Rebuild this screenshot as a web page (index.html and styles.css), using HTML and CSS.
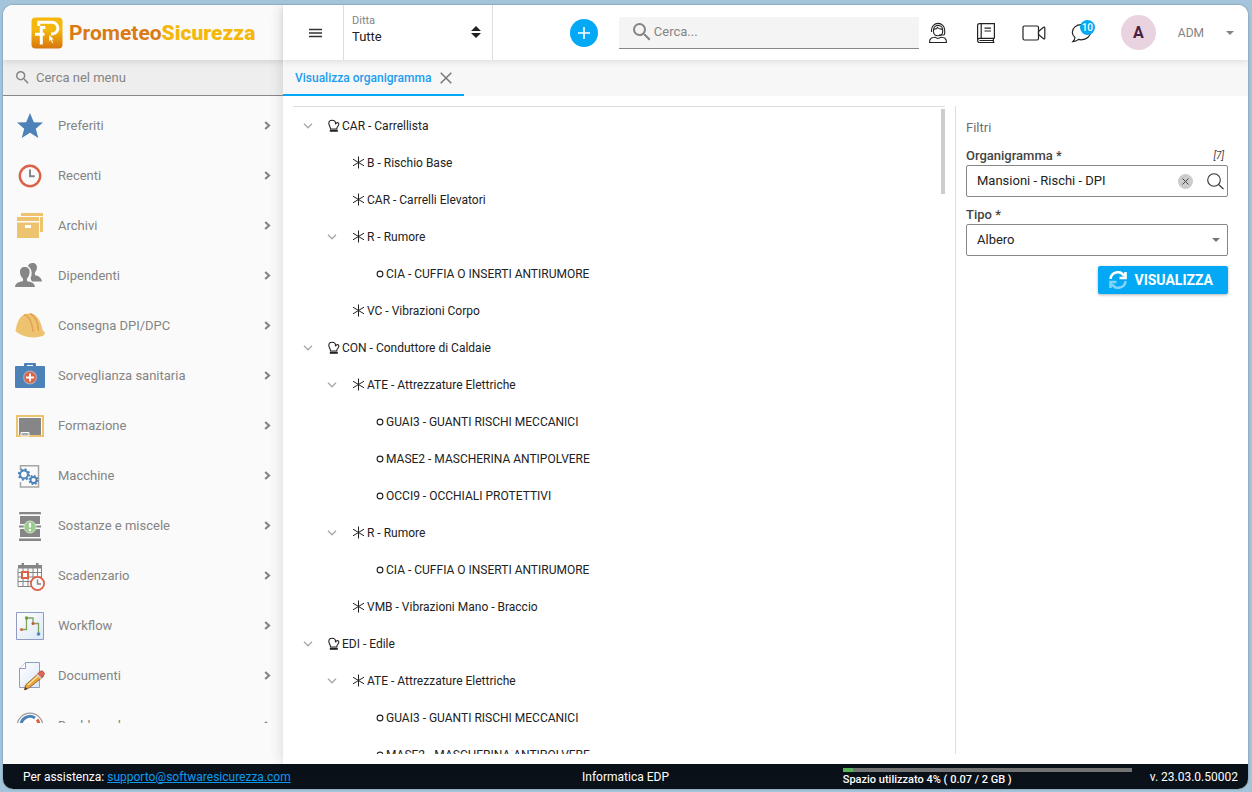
FILE: index.html
```html
<!DOCTYPE html>
<html lang="it">
<head>
    <meta charset="UTF-8">
    <meta name="viewport" content="width=device-width, initial-scale=1.0">
    <title>PrometeoSicurezza - Visualizza organigramma</title>
    <link rel="stylesheet" href="styles.css">
</head>
<body>
    <!-- Shared icons -->
    <svg class="sprite" aria-hidden="true">
        <symbol id="i-right" viewBox="0 0 8 10">
            <path d="M2.200 1L6 4.500 2.200 8" fill="none" stroke="currentColor" stroke-width="2.200"/>
        </symbol>
        <symbol id="i-down" viewBox="0 0 10 6">
            <path d="M1 .8l4 4 4-4" fill="none" stroke="currentColor" stroke-width="1.400"/>
        </symbol>
        <symbol id="i-caret" viewBox="0 0 8 4">
            <path d="M0 0h8L4 4z" fill="currentColor"/>
        </symbol>
        <symbol id="i-search" viewBox="3 3 18 18">
            <path d="M15.500 14h-.79l-.28-.27A6.470 6.470 0 0 0 16 9.500 6.500 6.500 0 1 0 9.500 16c1.610 0 3.090-.59 4.230-1.570l.27.28v.79l5 4.990L20.490 19l-4.990-5zm-6 0C7.010 14 5 11.990 5 9.500S7.010 5 9.500 5 14 7.010 14 9.500 11.990 14 9.500 14z" fill="currentColor"/>
        </symbol>
        <symbol id="i-glove" viewBox="0 0 12 14">
            <path d="M2.600 10C2.400 8 .9 6.300.8 4.200.8 2.400 2.300 1.200 4.200 1.200c2 0 3.300 1.100 3.300 3v1c.6-1.300 2-2 2.900-1.300 1 .9.2 2.400-.7 3.600-.5.7-.9 1.500-1 2.500z" fill="none" stroke="currentColor" stroke-width="1.100"/>
            <path d="M1.800 10.800h8v2h-8z" fill="currentColor"/>
        </symbol>
        <symbol id="i-risk" viewBox="0 0 13 13">
            <path d="M6.500.5v12M1 3.200l11 6.600M12 3.200L1 9.800" fill="none" stroke="currentColor"/>
        </symbol>
        <symbol id="i-dpi" viewBox="0 0 8 8">
            <circle cx="4" cy="4" r="2.900" fill="none" stroke="currentColor" stroke-width="1.100"/>
        </symbol>
    </svg>

    <div class="app">
        <div class="workspace">
            <aside class="sidebar">
                <a class="logo" href="#">
                    <svg width="32" height="32" viewBox="0 0 32 32">
                        <defs>
                            <linearGradient id="logoFill" x1="0" y1="0" x2="0" y2="1">
                                <stop offset=".4" stop-color="#f4b80c"/>
                                <stop offset="1" stop-color="#d87410"/>
                            </linearGradient>
                        </defs>
                        <rect x=".5" y=".5" width="31" height="31" rx="4" fill="url(#logoFill)"/>
                        <path d="M7.800 9V5.300H21a5.700 5.700 0 0 1 0 11.700h-1M4 17.300h9.500M10.300 27.500V10.500h4" fill="none" stroke="#fff" stroke-width="3"/>
                        <path d="M18 17.500l5 5-2 .2 1.400 3-1.300.6-1.300-3-1.700 1.300z" fill="#fff" stroke="#e0901a" stroke-width=".4"/>
                    </svg>
                    <span>Prometeo<b>Sicurezza</b></span>
                </a>
                <div class="menu-search">
                    <svg width="13" height="13"><use href="#i-search"/></svg>
                    <input type="text" placeholder="Cerca nel menu" aria-label="Cerca nel menu">
                </div>
                <nav class="menu">
                    <a class="menu-item" href="#">
                        <svg width="30" height="30" viewBox="0 0 30 30"><path d="M15 2l3.800 9.200 9.200.4-7.200 6.200 2.500 9.200L15 21.800 6.700 27l2.500-9.200L2 11.600l9.200-.4z" fill="#4d82b8"/></svg>
                        <span>Preferiti</span>
                        <svg class="arrow" width="8" height="10"><use href="#i-right"/></svg>
                    </a>
                    <a class="menu-item" href="#">
                        <svg width="30" height="30" viewBox="0 0 30 30" fill="none"><circle cx="15" cy="15" r="10.200" stroke="#dc6247" stroke-width="2.400"/><path d="M15 8.500v6.800h4.800" stroke="#868686" stroke-width="2"/></svg>
                        <span>Recenti</span>
                        <svg class="arrow" width="8" height="10"><use href="#i-right"/></svg>
                    </a>
                    <a class="menu-item" href="#">
                        <svg width="30" height="30" viewBox="0 0 30 30" fill="#eec36f"><path d="M6 2h22v3H6zM25 6h3v15h-3zM2 6h22v4H2zM2 11.500h22V27H2z"/><path d="M10 14h6v3h-6z" fill="#fff"/></svg>
                        <span>Archivi</span>
                        <svg class="arrow" width="8" height="10"><use href="#i-right"/></svg>
                    </a>
                    <a class="menu-item" href="#">
                        <svg width="30" height="30" viewBox="0 0 30 30" fill="#868686"><path d="M13 5c.5-2 2.300-3 4.500-3 3 0 4.700 2 4.400 5-.2 2-1 3.300-2 4.400V14c3 1.200 6.500 1.800 7.100 6.500H17l-1.500-3c1.500-3.500 2.300-9-2.500-12.500z"/><path d="M5 11.500C4.700 8 6.600 6 9.800 6s5.100 2 4.800 5.500c-.2 2.700-1.300 4.700-2.600 6V20c4 1.300 7.500 1.500 8 6H0c.5-4.500 4-4.700 8-6v-2.500c-1.500-1.300-2.800-3.300-3-6z"/></svg>
                        <span>Dipendenti</span>
                        <svg class="arrow" width="8" height="10"><use href="#i-right"/></svg>
                    </a>
                    <a class="menu-item" href="#">
                        <svg width="30" height="30" viewBox="0 0 30 30"><path d="M.5 20C2 11 5 3 13 2.500 22 2 26 10 27.500 19c3 2 3 4.500 0 6-9 3-21 1-27-5z" fill="#eec36f"/><path d="M9 3.800c5 1 8.500 8 9 17M15 2.800c6 2 8 10 8.500 17" fill="none" stroke="#e2a053" stroke-width="1.500"/></svg>
                        <span>Consegna DPI/DPC</span>
                        <svg class="arrow" width="8" height="10"><use href="#i-right"/></svg>
                    </a>
                    <a class="menu-item" href="#">
                        <svg width="30" height="30" viewBox="0 0 30 30"><path d="M9 5V3q0-1 1-1h10q1 0 1 1v2h8q1 0 1 1v20q0 1-1 1H1q-1 0-1-1V6q0-1 1-1zm3 0h6V4h-6z" fill="#4d82b8"/><circle cx="15" cy="16.500" r="6.300" fill="#dc6247" stroke="#b4a9ab" stroke-width="1.200"/><path d="M15 12.500v8M11 16.500h8" stroke="#fff" stroke-width="1.800"/></svg>
                        <span>Sorveglianza sanitaria</span>
                        <svg class="arrow" width="8" height="10"><use href="#i-right"/></svg>
                    </a>
                    <a class="menu-item" href="#">
                        <svg width="30" height="30" viewBox="0 0 30 30"><path d="M2 5h26v20H2z" fill="#fff" stroke="#eec36f" stroke-width="2"/><path d="M4 7h22v17H4z" fill="#868686"/><path d="M6 21.500h8V25H6z" fill="#aaa" stroke="#fff"/></svg>
                        <span>Formazione</span>
                        <svg class="arrow" width="8" height="10"><use href="#i-right"/></svg>
                    </a>
                    <a class="menu-item" href="#">
                        <svg width="30" height="30" viewBox="0 0 30 30" fill="none"><path d="M5.500 9V4.800h18V26h-18v-5" stroke="#a5a5a5" stroke-width="1.500"/><g stroke="#4d82b8"><circle cx="9" cy="13.500" r="3.900" stroke-width="2"/><circle cx="9" cy="13.500" r="5.300" stroke-width="1.800" stroke-dasharray="2 2.160"/><circle cx="18.500" cy="19" r="3" stroke-width="1.800"/><circle cx="18.500" cy="19" r="4.300" stroke-width="1.600" stroke-dasharray="1.700 1.680"/></g></svg>
                        <span>Macchine</span>
                        <svg class="arrow" width="8" height="10"><use href="#i-right"/></svg>
                    </a>
                    <a class="menu-item" href="#">
                        <svg width="30" height="30" viewBox="0 0 30 30"><path d="M4 2q0-1 1-1h20q1 0 1 1v1.200H4zM5 5h20v8H5zM4 14.500h22v2H4zM5 18h20v8H5zM4 27.500h22V30H4z" fill="#868686"/><circle cx="15" cy="16" r="6" fill="#9bcb8f" stroke="#d5e4d0"/><path d="M15 12v4.500M15 18v2" stroke="#fff" stroke-width="2"/></svg>
                        <span>Sostanze e miscele</span>
                        <svg class="arrow" width="8" height="10"><use href="#i-right"/></svg>
                    </a>
                    <a class="menu-item" href="#">
                        <svg width="30" height="30" viewBox="0 0 30 30" fill="none"><path d="M3 7.500v18h20M3 11.500h24M3 16h24M3 20.500h20M8 7v19M13 7v19M18 7v19M22.500 7v14M26.500 7v10" stroke="#868686"/><path d="M3 4h3.500V2h2.500v2h12V2h2.500v2H27v3.500H3z" fill="#868686"/><path d="M7 11h6v6H7z" fill="#fff" stroke="#dc6247" stroke-width="2"/><circle cx="22.500" cy="22.500" r="6.600" fill="#fafafa" stroke="#dc6247" stroke-width="1.800"/><path d="M22.500 18.500v4.500h3.500" stroke="#868686" stroke-width="1.400"/></svg>
                        <span>Scadenzario</span>
                        <svg class="arrow" width="8" height="10"><use href="#i-right"/></svg>
                    </a>
                    <a class="menu-item" href="#">
                        <svg width="30" height="30" viewBox="0 0 30 30"><defs><linearGradient id="sheet" x1="0" y1="0" x2="1" y2="1"><stop stop-color="#fff"/><stop offset="1" stop-color="#dce7f6"/></linearGradient></defs><path d="M1.500 1.500h27v27h-27z" fill="url(#sheet)" stroke="#8f9dc6"/><path d="M6 18.500h5.500V7H18v5.500h5.500V22" fill="none" stroke="#7fa35a" stroke-width="1.300"/><circle cx="6.500" cy="18.500" r="1.600" fill="#c8704c"/><path d="M10 5.500h3v3h-3z" fill="#6fa043"/><circle cx="18" cy="12.500" r="1.500" fill="#d25338"/><circle cx="23.500" cy="23" r="1.800" fill="#4d86c5"/></svg>
                        <span>Workflow</span>
                        <svg class="arrow" width="8" height="10"><use href="#i-right"/></svg>
                    </a>
                    <a class="menu-item" href="#">
                        <svg width="30" height="30" viewBox="0 0 30 30"><path d="M10.500 1.500h14v25h-20v-19z" fill="url(#sheet)" stroke="#8f9dc6"/><path d="M10.500 1.500v6h-6" fill="#fff" stroke="#8f9dc6"/><path d="M24.500 11.500l4 4L14 27l-4.500 2 1-5z" fill="#e9a13b" stroke="#8a5a2a" stroke-width=".8"/><path d="M13 24L25 13" stroke="#ffe09a" stroke-width="1.500"/><path d="M22.500 13l3-3q1.500-.8 3 .8t.8 3l-3 3z" fill="#dd6657" stroke="#954238" stroke-width=".6"/><path d="M22 13.500l4 3.800" stroke="#cfd5dc" stroke-width="1.600"/><path d="M9.500 29l.8-3 2 2z" fill="#333"/></svg>
                        <span>Documenti</span>
                        <svg class="arrow" width="8" height="10"><use href="#i-right"/></svg>
                    </a>
                    <a class="menu-item" href="#">
                        <svg width="30" height="30" viewBox="0 0 30 30" fill="none"><circle cx="15" cy="15" r="12.800" fill="#fff" stroke="#999" stroke-width="1.200"/><path d="M6 15a9 9 0 0 1 14-8" stroke="#4d82b8" stroke-width="3"/><path d="M22 8.500a9 9 0 0 1 2 5" stroke="#dc6247" stroke-width="3"/></svg>
                        <span>Dashboard</span>
                        <svg class="arrow" width="8" height="10"><use href="#i-right"/></svg>
                    </a>
                </nav>
            </aside>

            <div class="content">
                <header class="header">
                    <button class="menu-toggle" type="button" aria-label="Menu">
                        <svg width="13" height="10" viewBox="0 0 13 10"><path d="M0 1.500h13M0 5h13M0 8.500h13" stroke="#333" stroke-width="1.500"/></svg>
                    </button>
                    <div class="company">
                        <label for="company">Ditta</label>
                        <select id="company"><option>Tutte</option></select>
                        <svg width="10" height="12" viewBox="0 0 10 12"><path d="M5 0l5 5H0zM5 12l5-5H0z" fill="#222"/></svg>
                    </div>
                    <div class="tools">
                        <button class="add" type="button" aria-label="Aggiungi">
                            <svg width="12" height="12" viewBox="0 0 12 12"><path d="M6 0v12M0 6h12" stroke="#fff" stroke-width="1.600"/></svg>
                        </button>
                        <div class="search">
                            <svg width="18" height="18"><use href="#i-search"/></svg>
                            <input type="text" placeholder="Cerca..." aria-label="Cerca">
                        </div>
                        <div class="actions">
                            <button type="button" aria-label="Assistenza">
                                <svg width="20" height="22" viewBox="0 0 20 22" fill="none" stroke="#222" stroke-width="1.100"><path d="M3.500 10V8a6.600 6.600 0 0 1 13.200 0v3.500q0 1.500-1.500 1.500H11"/><path d="M5.500 10V8a4.600 4.600 0 0 1 9.200 0v2M5.500 7q3 .5 4-1.500 1.500 2 5 1.500M5.500 10c.5 5 8.500 5 9.200 0"/><path d="M1.500 20.500c0-4.500 2.500-5 5.500-5.300q3 2.500 6 0c3 .3 5.500.8 5.500 5.300z"/></svg>
                            </button>
                            <button type="button" aria-label="Manuale">
                                <svg width="20" height="22" viewBox="0 0 20 22" fill="none" stroke="#222" stroke-width="1.200"><path d="M18.400 16.400V1.600H3.500Q1.600 1.600 1.600 3.500v14.800q0 2.200 2 2.200h14.800M18.400 16.400H3.600q-2 0-2 2M17.400 16.400v4M3.500 18.500h14M5.200 1.600v14.800M8.500 6.200h6.500M8.500 9h6.500"/></svg>
                            </button>
                            <button type="button" aria-label="Video">
                                <svg width="24" height="18" viewBox="0 0 24 18" fill="none" stroke="#222" stroke-width="1.200"><rect x="1" y="2" width="15.500" height="14" rx="1.500"/><path d="M16.500 7.500l5-4.200q1.300-.6 1.300.6v10.200q0 1.200-1.300.6l-5-4.200z"/></svg>
                            </button>
                            <button class="messages" type="button" aria-label="Messaggi">
                                <svg width="22" height="20" viewBox="0 0 22 20" fill="none" stroke="#222" stroke-width="1.200"><path d="M4 14.500C2.300 13 1.300 11.200 1.300 9.200c0-4.200 4-7.500 9-7.500s9.200 3.300 9.200 7.500-4.100 7.600-9.200 7.600q-1.500 0-2.800-.4-2.300 2.200-5.700 2.200Q3.800 16.600 4 14.500z"/></svg>
                                <span class="badge">10</span>
                            </button>
                        </div>
                        <button class="user" type="button">
                            <span class="avatar">A</span>
                            <span>ADM</span>
                            <svg width="8" height="4"><use href="#i-caret"/></svg>
                        </button>
                    </div>
                </header>

                <div class="tabs">
                    <div class="tab">
                        <a href="#">Visualizza organigramma</a>
                        <button type="button" aria-label="Chiudi">
                            <svg width="12" height="12" viewBox="0 0 12 12"><path d="M.7.700l10.600 10.600M11.300.7L.7 11.300" stroke="#777" stroke-width="1.500"/></svg>
                        </button>
                    </div>
                </div>

                <main class="page">
                    <section class="tree">
                        <div class="scroll-thumb"></div>
                        <ul>
                            <li>
                                <div class="node"><button type="button" aria-label="Chiudi"><svg width="10" height="6"><use href="#i-down"/></svg></button><svg width="12" height="14"><use href="#i-glove"/></svg>CAR - Carrellista</div>
                                <ul>
                                    <li><div class="node"><svg width="13" height="13"><use href="#i-risk"/></svg>B - Rischio Base</div></li>
                                    <li><div class="node"><svg width="13" height="13"><use href="#i-risk"/></svg>CAR - Carrelli Elevatori</div></li>
                                    <li>
                                        <div class="node"><button type="button" aria-label="Chiudi"><svg width="10" height="6"><use href="#i-down"/></svg></button><svg width="13" height="13"><use href="#i-risk"/></svg>R - Rumore</div>
                                        <ul>
                                            <li><div class="node"><svg width="8" height="8"><use href="#i-dpi"/></svg>CIA - CUFFIA O INSERTI ANTIRUMORE</div></li>
                                        </ul>
                                    </li>
                                    <li><div class="node"><svg width="13" height="13"><use href="#i-risk"/></svg>VC - Vibrazioni Corpo</div></li>
                                </ul>
                            </li>
                            <li>
                                <div class="node"><button type="button" aria-label="Chiudi"><svg width="10" height="6"><use href="#i-down"/></svg></button><svg width="12" height="14"><use href="#i-glove"/></svg>CON - Conduttore di Caldaie</div>
                                <ul>
                                    <li>
                                        <div class="node"><button type="button" aria-label="Chiudi"><svg width="10" height="6"><use href="#i-down"/></svg></button><svg width="13" height="13"><use href="#i-risk"/></svg>ATE - Attrezzature Elettriche</div>
                                        <ul>
                                            <li><div class="node"><svg width="8" height="8"><use href="#i-dpi"/></svg>GUAI3 - GUANTI RISCHI MECCANICI</div></li>
                                            <li><div class="node"><svg width="8" height="8"><use href="#i-dpi"/></svg>MASE2 - MASCHERINA ANTIPOLVERE</div></li>
                                            <li><div class="node"><svg width="8" height="8"><use href="#i-dpi"/></svg>OCCI9 - OCCHIALI PROTETTIVI</div></li>
                                        </ul>
                                    </li>
                                    <li>
                                        <div class="node"><button type="button" aria-label="Chiudi"><svg width="10" height="6"><use href="#i-down"/></svg></button><svg width="13" height="13"><use href="#i-risk"/></svg>R - Rumore</div>
                                        <ul>
                                            <li><div class="node"><svg width="8" height="8"><use href="#i-dpi"/></svg>CIA - CUFFIA O INSERTI ANTIRUMORE</div></li>
                                        </ul>
                                    </li>
                                    <li><div class="node"><svg width="13" height="13"><use href="#i-risk"/></svg>VMB - Vibrazioni Mano - Braccio</div></li>
                                </ul>
                            </li>
                            <li>
                                <div class="node"><button type="button" aria-label="Chiudi"><svg width="10" height="6"><use href="#i-down"/></svg></button><svg width="12" height="14"><use href="#i-glove"/></svg>EDI - Edile</div>
                                <ul>
                                    <li>
                                        <div class="node"><button type="button" aria-label="Chiudi"><svg width="10" height="6"><use href="#i-down"/></svg></button><svg width="13" height="13"><use href="#i-risk"/></svg>ATE - Attrezzature Elettriche</div>
                                        <ul>
                                            <li><div class="node"><svg width="8" height="8"><use href="#i-dpi"/></svg>GUAI3 - GUANTI RISCHI MECCANICI</div></li>
                                            <li><div class="node"><svg width="8" height="8"><use href="#i-dpi"/></svg>MASE2 - MASCHERINA ANTIPOLVERE</div></li>
                                        </ul>
                                    </li>
                                </ul>
                            </li>
                        </ul>
                    </section>

                    <form class="filters">
                        <h2>Filtri</h2>
                        <div class="field-head">
                            <label for="chart">Organigramma *</label>
                            <i>[7]</i>
                        </div>
                        <div class="field">
                            <input id="chart" type="text" value="Mansioni - Rischi - DPI">
                            <button class="clear" type="button" aria-label="Cancella">
                                <svg width="7" height="7" viewBox="0 0 7 7"><path d="M.5.500l6 6M6.500.5l-6 6" stroke="#444"/></svg>
                            </button>
                            <button type="button" aria-label="Cerca organigramma">
                                <svg width="17" height="17" viewBox="0 0 17 17" fill="none" stroke="#333" stroke-width="1.100"><circle cx="7" cy="7" r="6.300"/><path d="M11.500 11.500l5 4.500"/></svg>
                            </button>
                        </div>
                        <div class="field-head">
                            <label for="kind">Tipo *</label>
                        </div>
                        <div class="field">
                            <select id="kind"><option>Albero</option></select>
                            <svg class="caret" width="8" height="4"><use href="#i-caret"/></svg>
                        </div>
                        <button class="submit" type="button">
                            <svg width="18" height="18" viewBox="0 0 18 18" fill="none" stroke="#fff" stroke-width="2.600"><path d="M1.500 8A7.200 7.200 0 0 1 15 5M16.500 1v6h-6"/><path d="M16.500 10A7.200 7.200 0 0 1 3 13M1.500 17v-6h6" opacity=".5"/></svg>
                            VISUALIZZA
                        </button>
                    </form>
                </main>
            </div>
        </div>

        <footer class="footer">
            <div class="support">Per assistenza: <a href="mailto:supporto@softwaresicurezza.com">supporto@softwaresicurezza.com</a></div>
            <div>Informatica EDP</div>
            <div class="status">
                <div class="usage">
                    <progress id="space" value="0.07" max="2"></progress>
                    <label for="space">Spazio utilizzato 4% ( 0.07 / 2 GB )</label>
                </div>
                <span>v. 23.03.0.50002</span>
            </div>
        </footer>
    </div>
</body>
</html>
```
FILE: styles.css
```css
:root {
    --accent: #03a9f4;
    --tab: #1a9df0;
    --muted: #848484;
    --text: #222222;
    --line: #dddddd;
    --panel: #fafafa;
}

* {
    margin: 0;
    padding: 0;
    box-sizing: border-box;
}

body {
    height: 100vh;
    padding: 5px 4px 3px 3px;
    background: #a3c4da;
    color: var(--text);
    font-family: Roboto, sans-serif;
    font-size: 12px;
    line-height: 16px;
}

svg {
    display: block;
    flex-shrink: 0;
}

button,
input,
select {
    border: none;
    background: none;
    color: inherit;
    font: inherit;
    outline: none;
}

button {
    display: flex;
    align-items: center;
    justify-content: center;
    cursor: pointer;
}

select {
    appearance: none;
}

a {
    color: inherit;
    text-decoration: none;
}

ul {
    list-style: none;
}

.sprite {
    position: absolute;
    width: 0;
    height: 0;
}

/* Layout */
.app {
    display: flex;
    flex-direction: column;
    height: 100%;
    border-radius: 10px;
    overflow: hidden;
    background: #fff;
    box-shadow: 0 0 2px rgba(0, 0, 0, 0.4);
}

.workspace {
    display: flex;
    flex: 1;
    min-height: 0;
}

.content {
    position: relative;
    display: flex;
    flex: 1;
    flex-direction: column;
    min-width: 0;
    background: #fff;
    box-shadow: 0 0 14px rgba(0, 0, 0, 0.14);
}

/* Sidebar */
.sidebar {
    display: flex;
    flex-direction: column;
    width: 280px;
    background: var(--panel);
}

.logo {
    position: relative;
    display: flex;
    align-items: center;
    gap: 6px;
    height: 55px;
    padding-left: 28px;
    background: var(--panel);
    box-shadow: 0 2px 6px rgba(0, 0, 0, 0.12);
    color: #d97a14;
    font-size: 21px;
    font-weight: 700;
}

.logo b {
    color: #f4b80c;
}

.menu-search {
    display: flex;
    align-items: center;
    gap: 7px;
    height: 36px;
    padding-left: 13px;
    border-bottom: 1px solid #888;
    background: #eee;
    color: var(--muted);
    font-size: 13px;
}

.menu-search input {
    flex: 1;
    min-width: 0;
}

input::placeholder {
    color: var(--muted);
    opacity: 1;
}

.menu {
    flex: 1;
    min-height: 0;
    margin-bottom: 41px;
    padding-top: 5px;
    overflow: hidden;
}

.menu-item {
    display: flex;
    align-items: center;
    gap: 13px;
    height: 50px;
    padding: 0 12px;
    color: var(--muted);
    font-size: 13px;
}

.arrow {
    margin-left: auto;
}

/* Header */
.header {
    position: relative;
    display: flex;
    height: 55px;
    background: #fff;
    box-shadow: 0 2px 6px rgba(0, 0, 0, 0.1);
}

.menu-toggle {
    width: 61px;
    padding-left: 4px;
    border-right: 1px solid var(--line);
}

.company {
    position: relative;
    display: flex;
    flex-direction: column;
    width: 149px;
    padding-top: 8px;
    border-right: 1px solid var(--line);
}

.company label {
    padding-left: 8px;
    color: var(--muted);
    font-size: 11px;
}

.company select {
    padding-left: 8px;
    font-size: 13px;
}

.company svg {
    position: absolute;
    top: 21px;
    right: 11px;
    pointer-events: none;
}

.tools {
    display: flex;
    flex: 1;
    align-items: center;
    justify-content: flex-end;
    padding-right: 14px;
}

.add {
    width: 28px;
    height: 28px;
    border-radius: 50%;
    background: var(--accent);
}

.search {
    display: flex;
    align-items: center;
    gap: 3px;
    width: 300px;
    height: 32px;
    margin-left: 21px;
    padding-left: 14px;
    border-bottom: 1px solid #888;
    border-radius: 2px 2px 0 0;
    background: #f4f4f4;
    color: var(--muted);
    font-size: 13px;
}

.search input {
    flex: 1;
    min-width: 0;
}

.actions {
    display: flex;
    gap: 24px;
    margin-left: 7px;
}

.actions button {
    width: 24px;
    height: 24px;
}

.messages {
    position: relative;
}

.badge {
    position: absolute;
    top: -1px;
    right: -1px;
    width: 15px;
    height: 15px;
    border-radius: 50%;
    background: var(--accent);
    color: #fff;
    font-size: 10px;
    font-weight: 500;
    line-height: 15px;
}

.user {
    gap: 22px;
    margin-left: 27px;
    color: var(--muted);
}

.avatar {
    width: 35px;
    height: 35px;
    border-radius: 50%;
    background: #ead3e0;
    color: #4a2040;
    font-size: 16px;
    font-weight: 700;
    line-height: 35px;
}

/* Tabs */
.tabs {
    display: flex;
    height: 36px;
    background: #f7f7f7;
}

.tab {
    display: flex;
    align-items: center;
    gap: 9px;
    padding: 1px 12px 0;
    border-bottom: 2px solid var(--accent);
    color: var(--tab);
    font-weight: 500;
}

/* Page */
.page {
    display: flex;
    flex: 1;
    gap: 10px;
    min-height: 0;
    padding: 10px 20px 10px 10px;
}

.tree {
    position: relative;
    flex: 1;
    overflow: hidden;
    border-top: 1px solid var(--line);
}

.scroll-thumb {
    position: absolute;
    top: 2px;
    right: 0;
    width: 4px;
    height: 85px;
    background: #ccc;
}

.tree ul ul {
    padding-left: 24px;
}

.node {
    display: flex;
    align-items: center;
    gap: 2px;
    height: 37px;
    padding-left: 35px;
}

.node button {
    width: 30px;
    height: 30px;
    margin-left: -35px;
    margin-right: 3px;
    color: #aaa;
}

/* Filters */
.filters {
    display: flex;
    flex-direction: column;
    width: 273px;
    padding: 14px 0 0 10px;
    border-left: 1px solid var(--line);
}

.filters h2 {
    margin-bottom: 12px;
    color: #707070;
    font-size: 13px;
    font-weight: 400;
}

.field-head {
    display: flex;
    justify-content: space-between;
    height: 17px;
    color: #444;
    font-size: 13px;
    font-weight: 500;
}

.field-head i {
    padding-right: 4px;
    font-size: 10px;
    font-weight: 400;
}

.field {
    position: relative;
    display: flex;
    align-items: center;
    height: 32px;
    margin-bottom: 10px;
    padding-right: 3px;
    border: 1px solid #888;
    border-radius: 2px;
    font-size: 13px;
}

.field input,
.field select {
    flex: 1;
    min-width: 0;
    padding-left: 10px;
}

.field .clear {
    width: 15px;
    height: 15px;
    margin-right: 14px;
    border-radius: 50%;
    background: #ccc;
}

.caret {
    position: absolute;
    right: 7px;
    color: #777;
    pointer-events: none;
}

.submit {
    gap: 7px;
    align-self: flex-end;
    height: 28px;
    padding: 0 15px 0 11px;
    border-radius: 2px;
    background: var(--accent);
    box-shadow: 0 1px 3px rgba(0, 0, 0, 0.3);
    color: #fff;
    font-size: 14px;
    font-weight: 700;
}

/* Footer */
.footer {
    display: grid;
    grid-template-columns: 1fr auto 1fr;
    align-items: center;
    height: 25px;
    padding: 0 10px;
    background: #0a1118;
    color: #fff;
}

.support {
    padding-left: 10px;
}

.support a {
    color: #0d9af0;
    text-decoration: underline;
}

.status {
    display: flex;
    align-items: center;
    justify-content: flex-end;
    gap: 18px;
}

.usage {
    display: flex;
    flex-direction: column;
    width: 289px;
    padding-top: 3px;
    font-size: 11px;
    font-weight: 500;
}

progress {
    display: block;
    width: 100%;
    height: 4px;
    appearance: none;
}

progress::-webkit-progress-bar {
    background: #777;
}

progress::-webkit-progress-value {
    background: #5cb85c;
}
```
